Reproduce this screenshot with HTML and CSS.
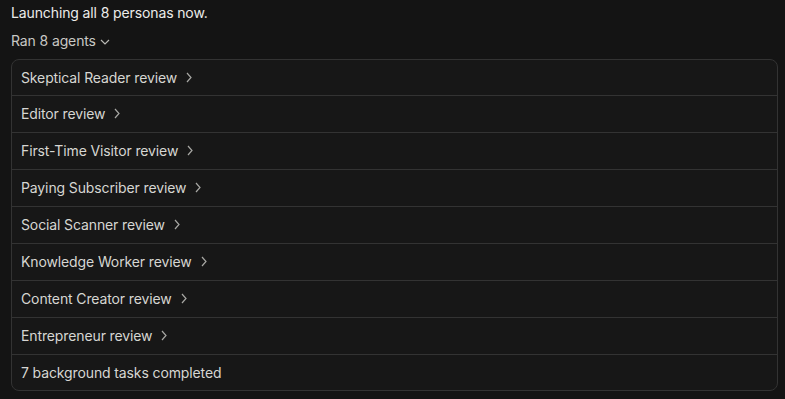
FILE: index.html
```html
<!DOCTYPE html>
<html>
<head>
<meta charset="utf-8">
<link rel="stylesheet" href="styles.css">
</head>
<body>
<div class="wrap">
  <p class="msg">Launching all 8 personas now.</p>
  <div class="toggle">Ran 8 agents
    <svg class="chev-down" width="10" height="6" viewBox="0 0 10 6"><path d="M1 1l4 4 4-4" fill="none" stroke="currentColor" stroke-width="1.2"/></svg>
  </div>
  <div class="card">
    <div class="row">Skeptical Reader review <svg class="chev" width="6" height="11" viewBox="0 0 6 11"><path d="M1 1l4 4.5L1 10" fill="none" stroke="currentColor" stroke-width="1.2"/></svg></div>
    <div class="row">Editor review <svg class="chev" width="6" height="11" viewBox="0 0 6 11"><path d="M1 1l4 4.5L1 10" fill="none" stroke="currentColor" stroke-width="1.2"/></svg></div>
    <div class="row">First-Time Visitor review <svg class="chev" width="6" height="11" viewBox="0 0 6 11"><path d="M1 1l4 4.5L1 10" fill="none" stroke="currentColor" stroke-width="1.2"/></svg></div>
    <div class="row">Paying Subscriber review <svg class="chev" width="6" height="11" viewBox="0 0 6 11"><path d="M1 1l4 4.5L1 10" fill="none" stroke="currentColor" stroke-width="1.2"/></svg></div>
    <div class="row">Social Scanner review <svg class="chev" width="6" height="11" viewBox="0 0 6 11"><path d="M1 1l4 4.5L1 10" fill="none" stroke="currentColor" stroke-width="1.2"/></svg></div>
    <div class="row">Knowledge Worker review <svg class="chev" width="6" height="11" viewBox="0 0 6 11"><path d="M1 1l4 4.5L1 10" fill="none" stroke="currentColor" stroke-width="1.2"/></svg></div>
    <div class="row">Content Creator review <svg class="chev" width="6" height="11" viewBox="0 0 6 11"><path d="M1 1l4 4.5L1 10" fill="none" stroke="currentColor" stroke-width="1.2"/></svg></div>
    <div class="row">Entrepreneur review <svg class="chev" width="6" height="11" viewBox="0 0 6 11"><path d="M1 1l4 4.5L1 10" fill="none" stroke="currentColor" stroke-width="1.2"/></svg></div>
    <div class="row last">7 background tasks completed</div>
  </div>
</div>
</body>
</html>
```
FILE: styles.css
```css
html, body {
  margin: 0;
  padding: 0;
  background: #141414;
}
body {
  font-family: Inter, "Noto Sans", sans-serif;
  font-size: 14px;
  letter-spacing: -0.12px;
  color: #d6d6d2;
}
.wrap {
  padding: 0 7px 0 11px;
}
.msg {
  margin: 0;
  padding-top: 4px;
  line-height: 18px;
  color: #ececea;
}
.toggle {
  display: flex;
  align-items: center;
  gap: 4px;
  margin-top: 10px;
  line-height: 18px;
  color: #c8c8c4;
}
.chev-down {
  color: #b8b8b4;
  margin-top: 2px;
}
.card {
  margin-top: 9px;
  border: 1px solid #333333;
  border-radius: 8px;
  background: #171717;
}
.row {
  display: flex;
  align-items: center;
  gap: 9px;
  height: 36px;
  padding: 0 9px;
  line-height: 18px;
  border-bottom: 1px solid #333333;
}
.row:first-child {
  height: 35px;
}
.row.last {
  height: 35px;
  border-bottom: none;
}
.chev {
  color: #a8a8a4;
  margin-top: -1px;
}
```
